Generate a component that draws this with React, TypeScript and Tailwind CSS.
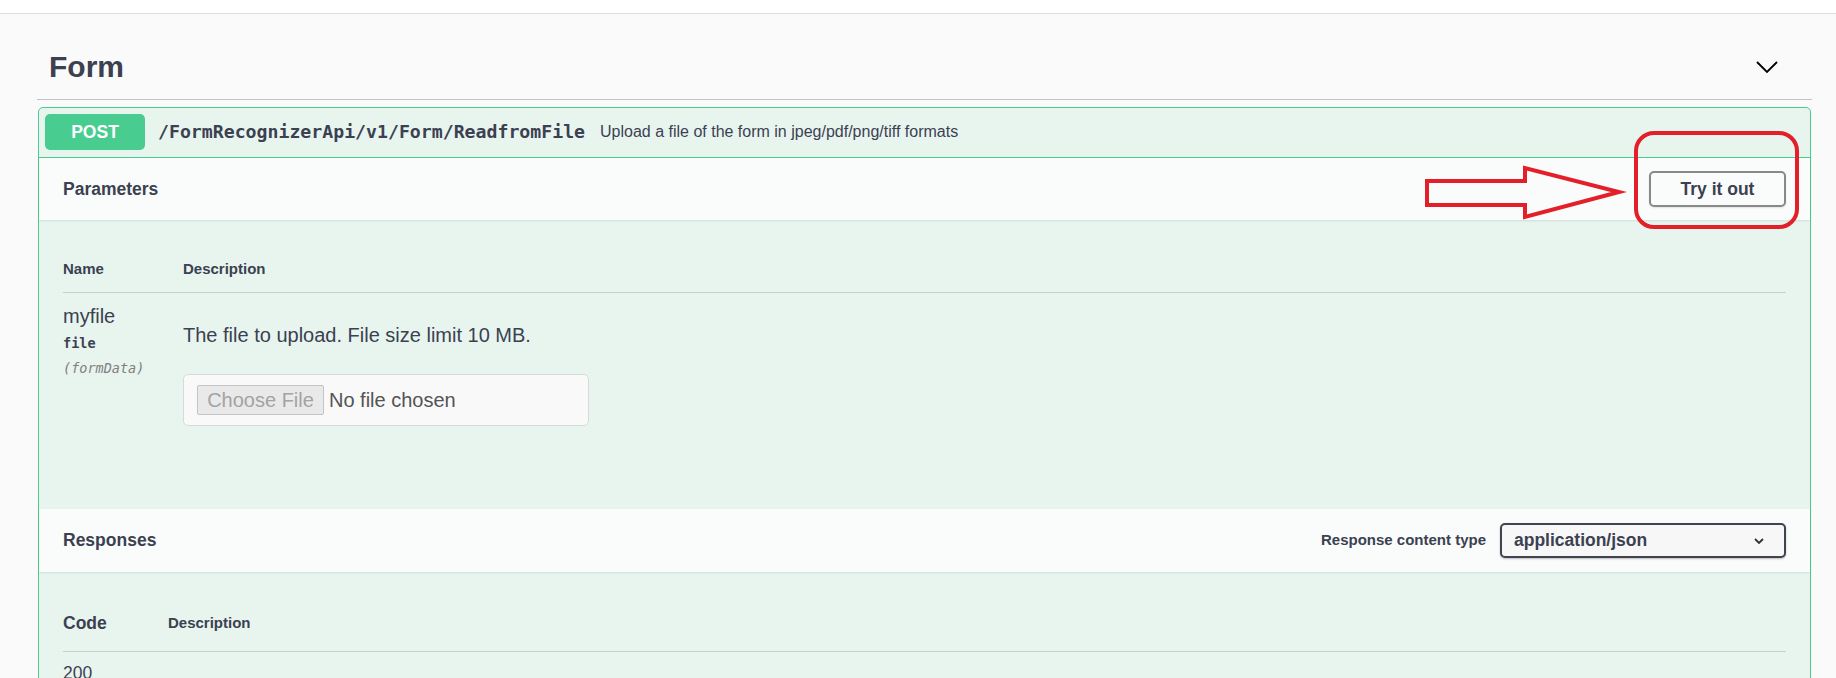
const App = () => {
    return (
        <div className="relative h-[678px] overflow-hidden bg-[#fafafa] font-['Liberation_Sans',Arial,sans-serif] text-[#3b4151]">
            <div className="h-[14px] bg-white border-b border-[#dedede]" />
            <div className="pl-[37px] pr-[24px]">
                {/* tag heading */}
                <div className="flex items-center justify-between border-b border-[#c1c3c7] pl-[12px] pr-[34px] pt-[35px] pb-[14px]">
                    <h3 className="text-[30px] leading-[36px] font-bold">Form</h3>
                    <svg width="22" height="12" viewBox="0 0 22 12" fill="none">
                        <polyline points="1,1 11,11 21,1" stroke="#000" strokeWidth="1.8" />
                    </svg>
                </div>

                {/* operation block */}
                <div className="mx-px mt-[7px] rounded-[5px] border border-[#49cc90] bg-[#e8f5ef]">
                    <div className="flex items-center border-b border-[#49cc90] pl-[6px] pt-[6px] pb-[7px]">
                        <span className="flex h-[36px] w-[100px] items-center justify-center rounded-[5px] bg-[#49cc90] text-[17.5px] font-bold text-white">POST</span>
                        <span className="ml-[13px] w-[442px] shrink-0 font-['DejaVu_Sans_Mono',monospace] text-[18.2px] font-bold">/FormRecognizerApi/v1/Form/ReadfromFile</span>
                        <span className="text-[16px]">Upload a file of the form in jpeg/pdf/png/tiff formats</span>
                    </div>

                    <div className="flex h-[62px] items-center justify-between bg-[#fafcfb] px-[24px] shadow-[0_1px_2px_rgba(0,0,0,0.1)]">
                        <h4 className="text-[17.5px] font-bold">Parameters</h4>
                        <button className="h-[36px] w-[137px] rounded-[5px] border-2 border-[#888888] text-[17.5px] font-bold shadow-[0_1px_2px_rgba(0,0,0,0.1)]">Try it out</button>
                    </div>

                    <div className="h-[289px] px-[24px] pt-[40px]">
                        <div className="flex border-b border-[#c5d2cc] pb-[15px] text-[15px] leading-[17px] font-bold">
                            <span className="w-[120px]">Name</span>
                            <span>Description</span>
                        </div>
                        <div className="flex pt-[12px]">
                            <div className="w-[120px]">
                                <div className="text-[20px] leading-[23px]">myfile</div>
                                <div className="mt-[7px] font-['DejaVu_Sans_Mono',monospace] text-[13.5px] leading-[16px] font-bold">file</div>
                                <div className="mt-[9px] font-['DejaVu_Sans_Mono',monospace] text-[13.5px] leading-[16px] italic text-[#808080]">(formData)</div>
                            </div>
                            <div>
                                <p className="mt-[19px] text-[20px] leading-[23px]">The file to upload. File size limit 10 MB.</p>
                                <div className="mt-[27px] flex h-[52px] w-[406px] items-center rounded-[5px] border border-[#d9d9d9] bg-[#f9f9f9] px-[13px]">
                                    <span className="flex h-[30px] w-[127px] items-center justify-center rounded-[2px] border border-[#c4c4c4] bg-[#e9e9e9] text-[20px] text-[#a3a3a3]">Choose File</span>
                                    <span className="ml-[5px] text-[20px] text-[#545454]">No file chosen</span>
                                </div>
                            </div>
                        </div>
                    </div>

                    <div className="flex h-[63px] items-center justify-between bg-[#fafcfb] px-[24px] shadow-[0_1px_2px_rgba(0,0,0,0.1)]">
                        <h4 className="text-[17.5px] font-bold">Responses</h4>
                        <div className="flex items-center gap-x-[14px]">
                            <span className="text-[15px] font-bold">Response content type</span>
                            <div className="flex h-[35px] w-[286px] items-center justify-between rounded-[5px] border-2 border-[#41444e] bg-[#f7f7f7] pl-[12px] pr-[20px] shadow-[0_1px_2px_rgba(0,0,0,0.25)]">
                                <span className="text-[17.5px] font-bold">application/json</span>
                                <svg width="10" height="6" viewBox="0 0 10 6" fill="none">
                                    <polyline points="1,1 5,5 9,1" stroke="#333" strokeWidth="1.8" />
                                </svg>
                            </div>
                        </div>
                    </div>

                    <div className="px-[24px] pt-[40px] pb-[40px]">
                        <div className="flex items-center border-b border-[#c5d2cc] pb-[16px]">
                            <span className="w-[105px] text-[17.5px] leading-[20px] font-bold">Code</span>
                            <span className="text-[15px] font-bold">Description</span>
                        </div>
                        <div className="pt-[11px] text-[17.5px] leading-[20px]">200</div>
                    </div>
                </div>
            </div>

            {/* red annotation over the page */}
            <svg className="pointer-events-none absolute left-0 top-0" width="1836" height="678" fill="none">
                <rect x="1636" y="133" width="161" height="94" rx="18" stroke="#e3202a" strokeWidth="4" />
                <polygon points="1427,181 1525,181 1525,168 1619,192 1525,217 1525,205 1427,205" stroke="#e3202a" strokeWidth="4" strokeLinejoin="miter" />
            </svg>
        </div>
    );
};

export default App;
